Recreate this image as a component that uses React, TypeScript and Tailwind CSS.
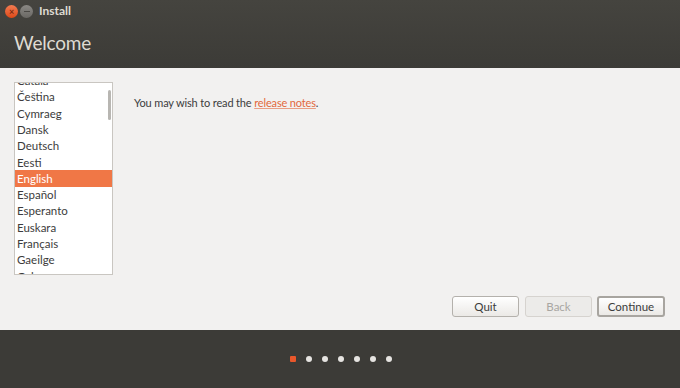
import React from "react";

const langs = ["Català","Čeština","Cymraeg","Dansk","Deutsch","Eesti","English","Español","Esperanto","Euskara","Français","Gaeilge","Galego"];

export default function App() {
  return (
    <div className="w-[680px] h-[388px] flex flex-col bg-[#f2f1f0] overflow-hidden" style={{ fontFamily: 'Lato, "Noto Sans", sans-serif' }}>
      <div className="h-[68px] bg-gradient-to-b from-[#45443f] to-[#3c3b37] flex flex-col">
        <div className="h-[22px] flex items-center pl-[5px] gap-[1px]">
          <div className="w-[13px] h-[13px] rounded-full bg-gradient-to-b from-[#f27b50] to-[#dd4814] flex items-center justify-center text-[#7a2a10] text-[9px] leading-none font-bold">×</div>
          <div className="w-[13px] h-[13px] rounded-full bg-gradient-to-b from-[#8a8884] to-[#6a6864] ml-[1px] flex items-center justify-center"><div className="w-[6px] h-[1px] bg-[#4a4844]" /></div>
          <span className="ml-[5px] text-[12px] font-bold text-[#dfdbd2]">Install</span>
        </div>
        <div className="pl-[14px] pt-[11px] text-[19px] tracking-[-0.2px] leading-none text-[#dfdbd2]">Welcome</div>
      </div>
      <div className="flex-1 flex flex-col px-[14px] pt-[14px] pb-[13px]">
        <div className="flex flex-1">
          <div className="relative w-[99px] h-[193px] bg-white border border-[#c9c6c1] overflow-hidden">
            <div className="mt-[-10.5px]">
              {langs.map((l) => (
                <div key={l} className={`h-[16.3px] pl-[2px] flex items-center text-[11.5px] ${l === "English" ? "bg-[#f07746] text-white" : "text-[#3c3c3c]"}`}>{l}</div>
              ))}
            </div>
            <div className="absolute right-[1px] top-[7px] w-[3px] h-[30px] bg-[#b8b6b2] rounded-sm" />
          </div>
          <div className="pl-[21px] pt-[13px] text-[11px] tracking-[-0.15px] text-[#3c3c3c]">
            You may wish to read the <span className="text-[#e2683c] underline decoration-[#e2683c]/60">release notes</span>.
          </div>
        </div>
        <div className="flex justify-end pr-[1px] mt-[1px]">
          <button className="w-[67px] h-[21px] rounded-[3px] border border-[#b4b1ac] bg-gradient-to-b from-[#ffffff] to-[#ebe9e6] text-[11.5px] text-[#3c3c3c]">Quit</button>
          <button className="ml-[6px] w-[67px] h-[21px] rounded-[3px] border border-[#d6d3cf] bg-[#ecebe9] text-[11.5px] text-[#a8a6a2]">Back</button>
          <button className="ml-[5px] w-[68px] h-[21px] rounded-[3px] border-2 border-[#a8a5a0] bg-gradient-to-b from-[#ffffff] to-[#ebe9e6] text-[11.5px] text-[#3c3c3c]">Continue</button>
        </div>
      </div>
      <div className="h-[58px] bg-[#3c3b37] flex items-center justify-center gap-[10px] pl-[2px]">
        <div className="w-[6px] h-[6px] rounded-[1px] bg-[#e9572b]" />
        {[0,1,2,3,4,5].map((i) => (
          <div key={i} className="w-[6px] h-[6px] rounded-full bg-[#e6e4e1]" />
        ))}
      </div>
    </div>
  );
}
